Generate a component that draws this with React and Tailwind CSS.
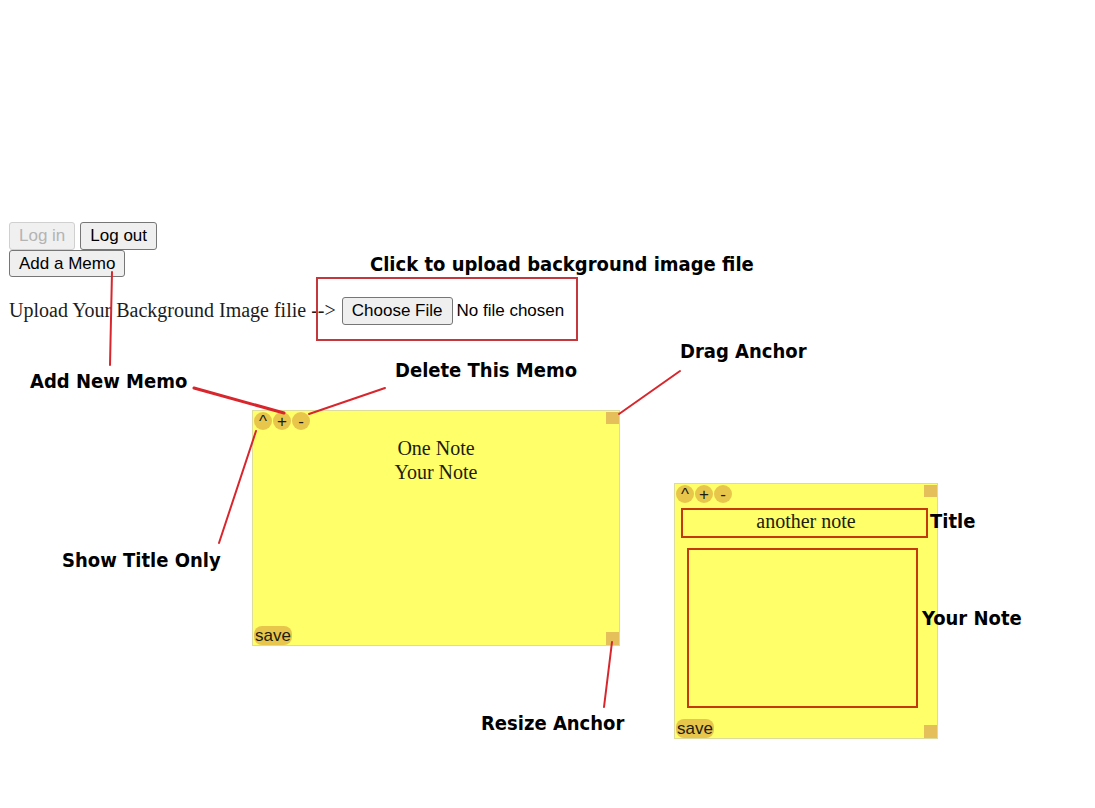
import React from "react";

const buttonClass =
  "rounded-[3px] border border-[#767676] bg-[#efefef] px-[9px] text-[17px] leading-6 text-black disabled:border-[#d0d0d0] disabled:bg-[#f0f0f0] disabled:text-[#b4b4b4]";

const toolClass =
  "flex h-[18px] w-[18px] items-center justify-center rounded-full bg-[#e8c64c] text-[17px] leading-none text-[#1c1c10]";

function Memo({ place, title, note, name }) {
  return (
    <section
      aria-label={name}
      className={`absolute flex flex-col border border-[#dcdc9c] bg-[#ffff69] ${place}`}
    >
      <div className="flex items-start justify-between pl-px pt-px">
        <div className="flex gap-px">
          <button type="button" aria-label="Show title only" className={toolClass}>^</button>
          <button type="button" aria-label="Add memo" className={toolClass}>+</button>
          <button type="button" aria-label="Delete memo" className={toolClass}>-</button>
        </div>
        <button type="button" aria-label="Drag" className="h-3 w-[13px] bg-[#e5c05a]" />
      </div>
      <input
        aria-label="Title"
        defaultValue={title}
        className="mt-1.5 h-6 w-full bg-transparent text-center font-['Liberation_Serif',serif] text-[20px] leading-6 text-[#1c1c10] outline-none"
      />
      <textarea
        aria-label="Note"
        defaultValue={note}
        className="min-h-0 w-full flex-1 resize-none bg-transparent text-center font-['Liberation_Serif',serif] text-[20px] leading-6 text-[#1c1c10] outline-none"
      />
      <div className="flex items-end justify-between pl-px">
        <button
          type="button"
          className="h-[19px] rounded-lg bg-[#e8c64c] px-px text-[17px] leading-[19px] text-[#1c1c10]"
        >
          save
        </button>
        <button type="button" aria-label="Resize" className="h-[13px] w-[13px] bg-[#e5c05a]" />
      </div>
    </section>
  );
}

function Label({ place, children }) {
  return (
    <p
      className={`pointer-events-none absolute whitespace-nowrap font-['DejaVu_Sans_Condensed','DejaVu_Sans',sans-serif] text-[20px] font-bold leading-6 text-black ${place}`}
    >
      {children}
    </p>
  );
}

export default function App() {
  return (
    <main className="relative min-h-screen overflow-hidden bg-white font-['Liberation_Sans',Arial,sans-serif]">
      <div className="px-[9px] pt-[222px]">
        <div className="flex gap-[5px]">
          <button type="button" disabled className={`h-7 ${buttonClass}`}>Log in</button>
          <button type="button" className={`h-7 ${buttonClass}`}>Log out</button>
        </div>
        <button type="button" className={`flex h-[27px] items-center ${buttonClass}`}>Add a Memo</button>
        <div className="mt-5 flex items-start gap-1.5">
          <label
            htmlFor="background"
            className="font-['Liberation_Serif',serif] text-[20px] leading-[26px] text-[#1c1c1c]"
          >
            Upload Your Background Image filie --&gt;
          </label>
          <input
            id="background"
            type="file"
            className="text-[17px] leading-6 text-black file:h-7 file:rounded-[3px] file:border file:border-solid file:border-[#767676] file:bg-[#efefef] file:px-[9px] file:text-black"
          />
        </div>
      </div>

      <Memo name="Memo 1" place="left-[252px] top-[410px] h-[236px] w-[368px]" title="One Note" note="Your Note" />
      <Memo name="Memo 2" place="left-[674px] top-[483px] h-[256px] w-[264px]" title="another note" note="" />

      <svg
        aria-hidden="true"
        width="1095"
        height="808"
        viewBox="0 0 1095 808"
        fill="none"
        stroke="#d8262c"
        strokeWidth="2"
        strokeLinecap="round"
        className="pointer-events-none absolute left-0 top-0 max-w-none"
      >
        <path d="M112 272 L110 365" />
        <path d="M194 388 L284 413" strokeWidth="3" />
        <path d="M385 388 L309 414" />
        <path d="M256 431 L219 543" />
        <path d="M680 371 L619 414" />
        <path d="M612 642 L604 707" />
        <rect x="317" y="278" width="260" height="62" stroke="#c4383c" />
        <rect x="682" y="509" width="245" height="28" stroke="#c43a10" />
        <rect x="688" y="549" width="229" height="158" stroke="#c43a10" />
      </svg>

      <Label place="left-[370px] top-[252px]">Click to upload background image file</Label>
      <Label place="left-[30px] top-[369px]">Add New Memo</Label>
      <Label place="left-[395px] top-[358px]">Delete This Memo</Label>
      <Label place="left-[680px] top-[339px]">Drag Anchor</Label>
      <Label place="left-[62px] top-[548px]">Show Title Only</Label>
      <Label place="left-[481px] top-[711px]">Resize Anchor</Label>
      <Label place="left-[930px] top-[509px]">Title</Label>
      <Label place="left-[922px] top-[606px]">Your Note</Label>
    </main>
  );
}
